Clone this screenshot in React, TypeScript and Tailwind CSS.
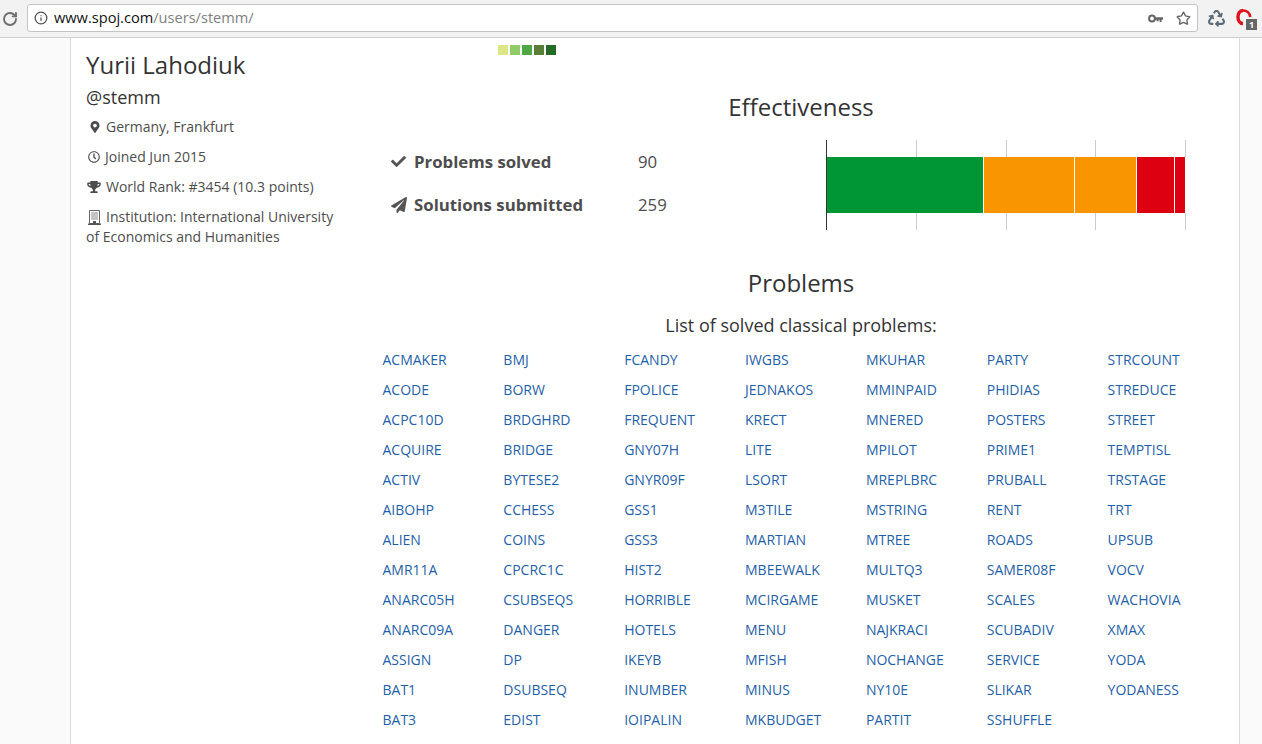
import React from 'react';
import { RotateCw, Star, Info } from 'lucide-react';
import { FaMapMarkerAlt, FaRegClock, FaTrophy, FaCheck, FaPaperPlane, FaRecycle } from 'react-icons/fa';

const problemColumns = [
  ['ACMAKER', 'ACODE', 'ACPC10D', 'ACQUIRE', 'ACTIV', 'AIBOHP', 'ALIEN', 'AMR11A', 'ANARC05H', 'ANARC09A', 'ASSIGN', 'BAT1', 'BAT3'],
  ['BMJ', 'BORW', 'BRDGHRD', 'BRIDGE', 'BYTESE2', 'CCHESS', 'COINS', 'CPCRC1C', 'CSUBSEQS', 'DANGER', 'DP', 'DSUBSEQ', 'EDIST'],
  ['FCANDY', 'FPOLICE', 'FREQUENT', 'GNY07H', 'GNYR09F', 'GSS1', 'GSS3', 'HIST2', 'HORRIBLE', 'HOTELS', 'IKEYB', 'INUMBER', 'IOIPALIN'],
  ['IWGBS', 'JEDNAKOS', 'KRECT', 'LITE', 'LSORT', 'M3TILE', 'MARTIAN', 'MBEEWALK', 'MCIRGAME', 'MENU', 'MFISH', 'MINUS', 'MKBUDGET'],
  ['MKUHAR', 'MMINPAID', 'MNERED', 'MPILOT', 'MREPLBRC', 'MSTRING', 'MTREE', 'MULTQ3', 'MUSKET', 'NAJKRACI', 'NOCHANGE', 'NY10E', 'PARTIT'],
  ['PARTY', 'PHIDIAS', 'POSTERS', 'PRIME1', 'PRUBALL', 'RENT', 'ROADS', 'SAMER08F', 'SCALES', 'SCUBADIV', 'SERVICE', 'SLIKAR', 'SSHUFFLE'],
  ['STRCOUNT', 'STREDUCE', 'STREET', 'TEMPTISL', 'TRSTAGE', 'TRT', 'UPSUB', 'VOCV', 'WACHOVIA', 'XMAX', 'YODA', 'YODANESS'],
];

function KeyIcon() {
  return (
    <svg viewBox="0 0 15 9" className="ml-auto w-[15px] h-[9px]">
      <circle cx="4" cy="4.5" r="2.9" fill="none" stroke="#666666" strokeWidth="2" />
      <path d="M6.5 3.3H15V5.7H13.6V8H11.6V5.7H10.6V7.2H8.6V5.7H6.5Z" fill="#666666" />
    </svg>
  );
}

function BuildingIcon() {
  return (
    <svg viewBox="0 0 13 15" className="inline ml-[2px] mr-[5px] w-[13px] h-[15px] align-[-3px]">
      <path d="M1.5 0.5H11.5V13.5H1.5Z" fill="none" stroke="#666666" />
      <path d="M3 3H10M3 5H10M3 7H10M3 9H10" stroke="#888888" />
      <path d="M0 13.5H13V15H0Z" fill="#555555" />
      <path d="M5 11H8V14H5Z" fill="#555555" />
    </svg>
  );
}

function BrowserBar() {
  return (
    <div className="h-[38px] flex items-center bg-[#f2f2f2] border-b border-[#d0d0d0]">
      <RotateCw className="w-[16px] h-[16px] ml-[2px] text-[#6e6e6e]" strokeWidth={2.8} />
      <div className="ml-[9px] w-[1171px] h-[28px] mt-[-1px] flex items-center bg-white border border-[#c4c4c4] rounded-[3px] pl-[6px] pr-[6px]">
        <Info className="w-[14px] h-[14px] text-[#555555]" strokeWidth={2.2} />
        <span className="ml-[6px] text-[14.6px] text-[#111111]">www.spoj.com<span className="text-[#808080]">/users/stemm/</span></span>
        <KeyIcon />
        <Star className="ml-[13px] w-[15px] h-[15px] text-[#666666]" strokeWidth={2.2} />
      </div>
      <FaRecycle className="ml-[10px] w-[17px] h-[17px] text-[#5d6b78]" />
      <div className="relative ml-[11px] w-[21px] h-[22px]">
        <svg viewBox="0 0 21 22" className="w-[21px] h-[22px]">
          <path d="M7 2.5C3.6 2.5 2 5.6 2 9C2 12.4 3.6 15.5 7 15.5" fill="none" stroke="#e0101c" strokeWidth="3.4" />
          <path d="M7 2.5C10.4 2.5 13.5 4.6 14.3 9" fill="none" stroke="#e0101c" strokeWidth="2.6" />
        </svg>
        <span className="absolute right-0 bottom-0 w-[11px] h-[11px] bg-[#666666] text-white text-[9px] leading-[11px] text-center font-bold">1</span>
      </div>
    </div>
  );
}

function Profile() {
  return (
    <div className="w-[301px] shrink-0 pl-[15px] text-[14px] text-[#4d4d4d]">
      <h1 className="mt-[10px] text-[24px] leading-[34px] text-[#333333]">Yurii Lahodiuk</h1>
      <h2 className="mt-[3px] text-[18px] leading-[24px] text-[#333333]">@stemm</h2>
      <div className="mt-[3px] leading-[30px] flex items-center">
        <FaMapMarkerAlt className="ml-[4px] w-[10px] h-[12px] text-[#4d4d4d]" />
        <span className="ml-[6px]">Germany, Frankfurt</span>
      </div>
      <div className="leading-[30px] flex items-center">
        <FaRegClock className="ml-[2px] w-[12px] h-[12px] text-[#4d4d4d]" />
        <span className="ml-[5px]">Joined Jun 2015</span>
      </div>
      <div className="leading-[30px] flex items-center">
        <FaTrophy className="ml-[1px] w-[14px] h-[12px] text-[#4d4d4d]" />
        <span className="ml-[5px]">World Rank: #3454 (10.3 points)</span>
      </div>
      <p className="mt-[5px] w-[260px] leading-[20px]">
        <BuildingIcon />
        Institution: International University of Economics and Humanities
      </p>
    </div>
  );
}

function EffectivenessChart() {
  return (
    <svg width="360" height="90" viewBox="0 0 360 90" className="block mt-[6px]">
      {[90, 180, 269, 359].map((x) => (
        <rect key={x} x={x} y="0" width="1" height="90" fill="#cccccc" />
      ))}
      <rect x="0" y="17" width="360" height="56" fill="#ffffff" />
      <rect x="1" y="17" width="156" height="56" fill="#009535" />
      <rect x="158" y="17" width="90" height="56" fill="#f89500" />
      <rect x="249" y="17" width="61" height="56" fill="#f89500" />
      <rect x="311" y="17" width="37" height="56" fill="#dc0010" />
      <rect x="349" y="17" width="10" height="56" fill="#dc0010" />
      <rect x="0" y="0" width="1" height="90" fill="#333333" />
    </svg>
  );
}

function Stats() {
  return (
    <div className="mt-[10px] flex">
      <div className="w-[454px] pl-[19px] pt-[6px] text-[#4d4d4d]">
        <div className="h-[43px] flex items-center text-[16.8px]">
          <FaCheck className="w-[15px] h-[15px] text-[#555555]" />
          <b className="ml-[8px] w-[224px] font-bold">Problems solved</b>
          <span>90</span>
        </div>
        <div className="h-[43px] flex items-center text-[16.8px]">
          <FaPaperPlane className="w-[16px] h-[16px] mr-[-1px] text-[#555555]" />
          <b className="ml-[8px] w-[224px] font-bold">Solutions submitted</b>
          <span>259</span>
        </div>
      </div>
      <EffectivenessChart />
    </div>
  );
}

function ProblemList() {
  return (
    <div className="mt-[8px] pl-[10.5px] flex">
      {problemColumns.map((col) => (
        <div key={col[0]} className="w-[120.85px] shrink-0 flex flex-col">
          {col.map((name) => (
            <a key={name} href="#" className="h-[30px] leading-[30px] text-[14px] text-[#1f5fa8]">{name}</a>
          ))}
        </div>
      ))}
    </div>
  );
}

export default function App() {
  return (
    <div className="h-[744px] overflow-hidden bg-[#fafafa] font-['Open_Sans',sans-serif]">
      <BrowserBar />
      <div className="ml-[70px] w-[1170px] h-[706px] bg-white border-x border-[#d9d9d9] flex">
        <Profile />
        <div className="w-[858px]">
          <div className="pl-[126px] pt-[7px] flex gap-[2px]">
            {['bg-[#dce887]', 'bg-[#8fcc67]', 'bg-[#4fa845]', 'bg-[#5a7d37]', 'bg-[#256b26]'].map((c) => (
              <span key={c} className={`w-[10px] h-[10px] ${c}`} />
            ))}
          </div>
          <h3 className="mt-[35px] text-center text-[24px] leading-[34px] text-[#333333]">Effectiveness</h3>
          <Stats />
          <h3 className="mt-[36px] text-center text-[24px] leading-[34px] text-[#333333]">Problems</h3>
          <p className="mt-[13px] text-center text-[18px] leading-[24px] text-[#333333]">List of solved classical problems:</p>
          <ProblemList />
        </div>
      </div>
    </div>
  );
}
